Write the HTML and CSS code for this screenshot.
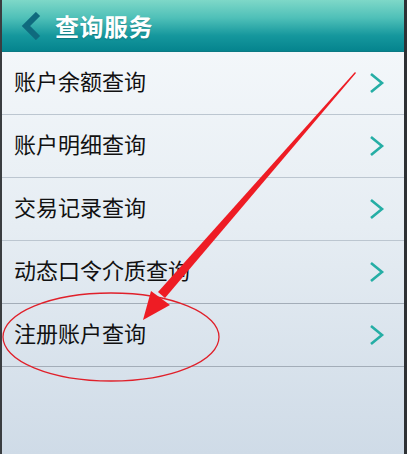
FILE: index.html
```html
<!DOCTYPE html>
<html lang="zh-CN">
<head>
  <meta charset="UTF-8">
  <title>查询服务</title>
  <link rel="stylesheet" href="styles.css">
</head>
<body>
  <div class="screen">
    <div class="topbar">
      <svg class="back" width="24" height="28" viewBox="0 0 24 28">
        <path d="M17 2 L5 14 L17 26" fill="none" stroke="#0f6a7e" stroke-width="6" stroke-linejoin="miter"/>
      </svg>
      <h1 class="title">查询服务</h1>
    </div>

    <ul class="menu">
      <li class="item"><span>账户余额查询</span><svg class="arrow" width="16" height="22" viewBox="0 0 16 22"><path d="M2 2 L13 11 L2 20" /></svg></li>
      <li class="item"><span>账户明细查询</span><svg class="arrow" width="16" height="22" viewBox="0 0 16 22"><path d="M2 2 L13 11 L2 20" /></svg></li>
      <li class="item"><span>交易记录查询</span><svg class="arrow" width="16" height="22" viewBox="0 0 16 22"><path d="M2 2 L13 11 L2 20" /></svg></li>
      <li class="item"><span>动态口令介质查询</span><svg class="arrow" width="16" height="22" viewBox="0 0 16 22"><path d="M2 2 L13 11 L2 20" /></svg></li>
      <li class="item"><span>注册账户查询</span><svg class="arrow" width="16" height="22" viewBox="0 0 16 22"><path d="M2 2 L13 11 L2 20" /></svg></li>
    </ul>

    <!-- annotation drawn on top of the screenshot -->
    <svg class="mark" width="407" height="454" viewBox="0 0 407 454">
      <ellipse cx="111" cy="337" rx="108" ry="44" fill="none" stroke="#e0202a" stroke-width="1.3"/>
      <polygon points="355,72 356,73 165,298 158,292" fill="#ee1c24"/>
      <polygon points="143,320 151,291 170,305" fill="#ee1c24"/>
    </svg>
  </div>
</body>
</html>
```

FILE: styles.css
```css
* {
  box-sizing: border-box;
}

body {
  margin: 0;
  font-family: "Noto Sans CJK SC", "Noto Sans", sans-serif;
}

.screen {
  position: relative;
  width: 407px;
  height: 454px;
  border-left: 2px solid #3a3d40;
  border-right: 3px solid #2e3134;
  background: linear-gradient(to bottom, #f7fafc 0%, #e6edf3 50%, #cfdbe7 100%);
  overflow: hidden;
}

.topbar {
  height: 52px;
  display: flex;
  align-items: center;
  padding-left: 19px;
  background: linear-gradient(to bottom, #7ed8c8 0%, #4fc0b8 35%, #15979d 70%, #05848e 100%);
  border-bottom: 1px solid #0b7a84;
}

.back {
  margin-top: 1px;
}

.title {
  margin: 0 0 0 10px;
  color: #fff;
  font-size: 24px;
  font-weight: bold;
  letter-spacing: 0.5px;
  text-shadow: 0 1px 1px rgba(0, 60, 70, 0.3);
}

.menu {
  list-style: none;
  margin: 0;
  padding: 0;
}

.item {
  height: 63px;
  display: flex;
  align-items: center;
  justify-content: space-between;
  padding: 0 19px 0 12px;
  border-bottom: 1px solid #bcc6d0;
  font-size: 22px;
  color: #111;
}

.item span {
  margin-top: -6px;
}

.item:nth-child(4),
.item:nth-child(5) {
  border-bottom-color: #a3adb8;
}

.arrow {
  fill: none;
  stroke: #25aea5;
  stroke-width: 2.6;
}

.mark {
  position: absolute;
  left: -2px;
  top: 0;
  pointer-events: none;
}
```
